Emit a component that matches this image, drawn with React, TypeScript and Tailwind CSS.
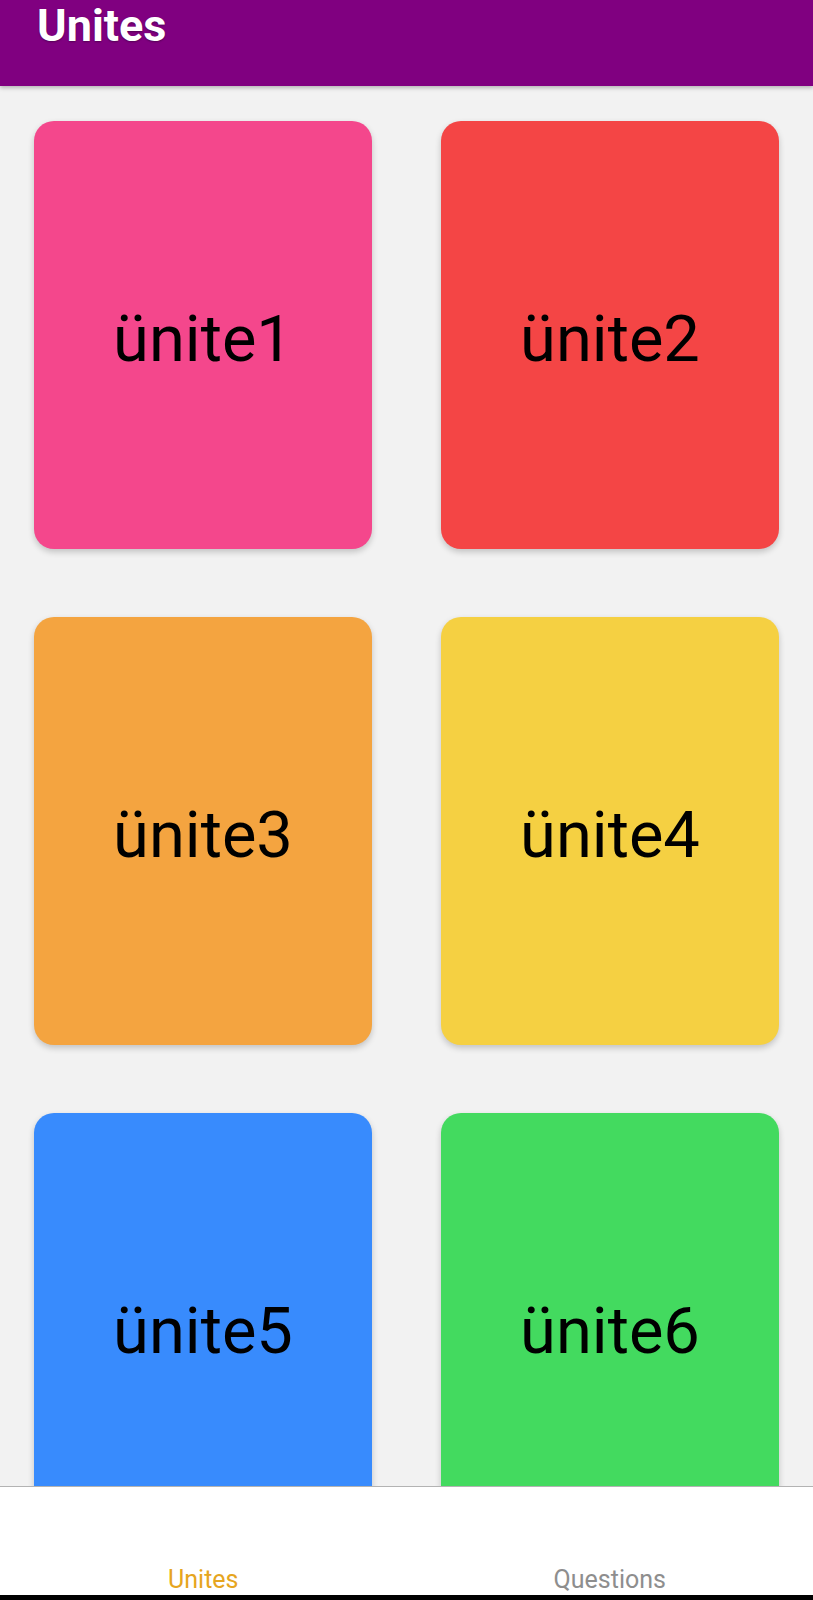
import React from "react";

const cards = [
  { label: "ünite1", bg: "bg-[#f4478c]" },
  { label: "ünite2", bg: "bg-[#f44545]" },
  { label: "ünite3", bg: "bg-[#f4a440]" },
  { label: "ünite4", bg: "bg-[#f5d042]" },
  { label: "ünite5", bg: "bg-[#388bfd]" },
  { label: "ünite6", bg: "bg-[#43da5f]" },
];

export default function App() {
  return (
    <div
      className="w-[813px] h-[1600px] flex flex-col bg-[#f2f2f2] overflow-hidden"
      style={{ fontFamily: "Roboto, 'Noto Sans', sans-serif" }}
    >
      <header className="relative z-10 h-[86px] shrink-0 bg-[#800080] pl-[37px] pt-[3px] shadow-[0_2px_4px_rgba(0,0,0,0.25)]">
        <h1 className="text-white font-bold text-[45px] leading-[45px] [text-shadow:0_1px_2px_rgba(0,0,0,0.35)]">
          Unites
        </h1>
      </header>
      <main className="flex-1 overflow-hidden px-[34px] pt-[35px]">
        <div className="grid grid-cols-2 gap-x-[69px] gap-y-[68px]">
          {cards.map((c) => (
            <div
              key={c.label}
              className={`${c.bg} h-[428px] rounded-[20px] shadow-[0_3px_6px_rgba(0,0,0,0.2)] flex items-center justify-center pt-[9px]`}
            >
              <span className="text-black text-[65px] leading-none">{c.label}</span>
            </div>
          ))}
        </div>
      </main>
      <nav className="h-[109px] shrink-0 bg-white border-t border-[#b3b3b3] flex items-end pb-[1px]">
        <div className="flex-1 text-center text-[25px] leading-[28px] text-[#e6a520]">Unites</div>
        <div className="flex-1 text-center text-[25px] leading-[28px] text-[#8e8e8e]">Questions</div>
      </nav>
      <div className="h-[5px] shrink-0 bg-black" />
    </div>
  );
}
